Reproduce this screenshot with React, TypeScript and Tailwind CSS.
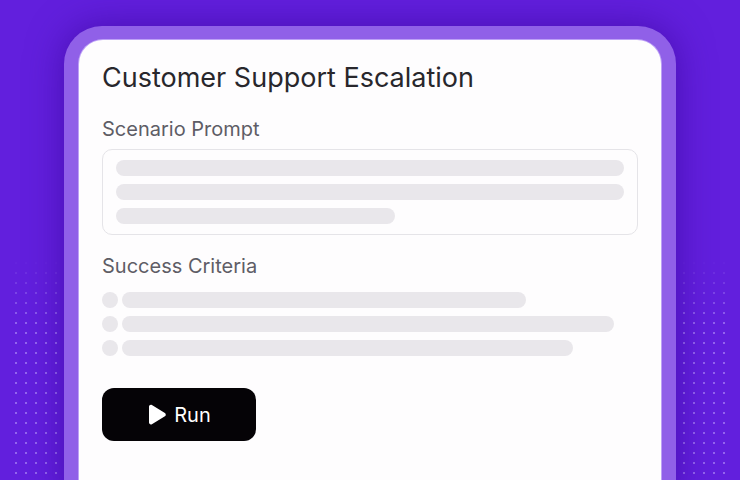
const dots =
  "bg-[radial-gradient(circle,rgba(196,170,255,0.5)_1px,transparent_1.3px)] bg-[length:10px_10px]";

function Bar({ className }: { className: string }) {
  return <div className={`h-4 rounded-full bg-[#e9e7eb] ${className}`} />;
}

function Criterion({ width }: { width: string }) {
  return (
    <div className="flex items-center gap-1">
      <div className="h-4 w-4 shrink-0 rounded-full bg-[#e9e7eb]" />
      <div className={`h-4 rounded-full bg-[#e9e7eb] ${width}`} />
    </div>
  );
}

export default function App() {
  return (
    <div
      className="relative h-[480px] w-[740px] overflow-hidden bg-[#621fdd]"
      style={{ fontFamily: "Inter, 'Noto Sans', sans-serif" }}
    >
      {/* dotted decoration on both sides */}
      <div
        className={`absolute left-[11px] top-[258px] h-[222px] w-[52px] ${dots} [mask-image:linear-gradient(to_bottom,transparent,black_30%)]`}
      />
      <div
        className={`absolute left-[679px] top-[258px] h-[222px] w-[52px] ${dots} [mask-image:linear-gradient(to_bottom,transparent,black_30%)]`}
      />

      <div className="relative ml-[64px] mt-[26px] w-[612px] rounded-t-[38px] bg-[#9060e8] px-[15px] pt-[14px] shadow-[0_0_36px_rgba(50,0,140,0.55)]">
        <div className="h-[460px] rounded-t-[24px] bg-[#fefdfe] px-[23px] pt-[22px] shadow-[0_0_0_1px_rgba(220,205,255,0.6)]">
          <h1 className="text-[27px] leading-[32px] text-[#28272c]">
            Customer Support Escalation
          </h1>

          <div className="mt-[23px] text-[20px] leading-6 text-[#5e5d66]">
            Scenario Prompt
          </div>
          <div className="mt-2 flex flex-col gap-2 rounded-[10px] border border-[#e5e4e8] px-[13px] py-[10px]">
            <Bar className="w-full" />
            <Bar className="w-full" />
            <Bar className="w-[279px]" />
          </div>

          <div className="mt-[19px] text-[20px] leading-6 text-[#5e5d66]">
            Success Criteria
          </div>
          <div className="mt-[14px] flex flex-col gap-2">
            <Criterion width="w-[404px]" />
            <Criterion width="w-[492px]" />
            <Criterion width="w-[451px]" />
          </div>

          <button className="mt-8 flex h-[53px] w-[154px] items-center justify-center gap-[7px] rounded-[12px] bg-[#050306] text-white">
            <svg width="20" height="22" viewBox="0 0 20 22" fill="white">
              <path d="M2 2.6c0-1.5 1.6-2.4 2.9-1.6l13 7.9c1.2.8 1.2 2.6 0 3.4l-13 7.9C3.6 21 2 20.1 2 18.6z" />
            </svg>
            <span className="text-[20px] leading-6">Run</span>
          </button>
        </div>
      </div>
    </div>
  );
}
